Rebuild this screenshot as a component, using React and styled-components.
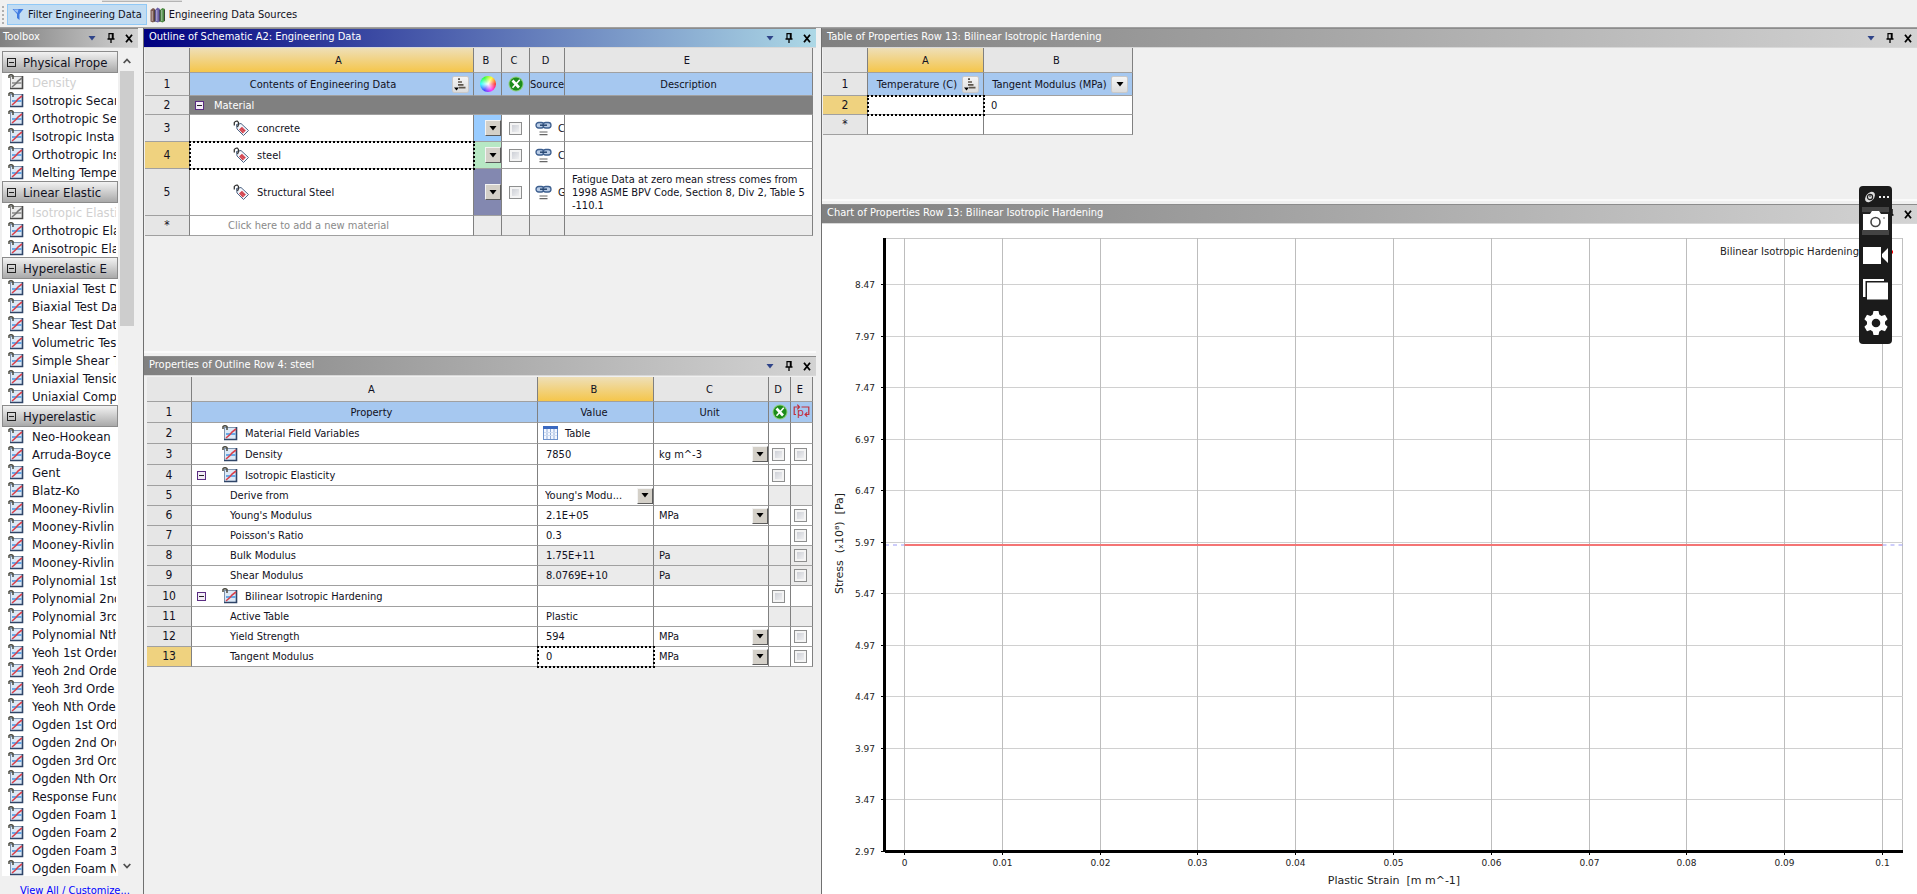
import React, { useLayoutEffect, useRef, useState } from "react";
import styled, { createGlobalStyle } from "styled-components";

const TOOLBOX = [
	{
		title: "Physical Prope",
		items: ["Density", "Isotropic Secan", "Orthotropic Se", "Isotropic Insta", "Orthotropic Ins", "Melting Tempe"],
		disabled: "Density",
	},
	{
		title: "Linear Elastic",
		items: ["Isotropic Elasti", "Orthotropic Ela", "Anisotropic Ela"],
		disabled: "Isotropic Elasti",
	},
	{
		title: "Hyperelastic E",
		items: ["Uniaxial Test D", "Biaxial Test Da", "Shear Test Dat", "Volumetric Tes", "Simple Shear T", "Uniaxial Tensio", "Uniaxial Compr"],
	},
	{
		title: "Hyperelastic",
		items: [
			"Neo-Hookean", "Arruda-Boyce", "Gent", "Blatz-Ko",
			"Mooney-Rivlin", "Mooney-Rivlin", "Mooney-Rivlin", "Mooney-Rivlin",
			"Polynomial 1st", "Polynomial 2nd", "Polynomial 3rd", "Polynomial Nth",
			"Yeoh 1st Order", "Yeoh 2nd Orde", "Yeoh 3rd Orde", "Yeoh Nth Orde",
			"Ogden 1st Ord", "Ogden 2nd Ord", "Ogden 3rd Ord", "Ogden Nth Ord",
			"Response Func", "Ogden Foam 1", "Ogden Foam 2", "Ogden Foam 3", "Ogden Foam N",
		],
	},
];

const MATERIALS = [
	{ row: 3, name: "concrete", color: "#99ccff", source: "C", description: "", height: 27 },
	{ row: 4, name: "steel", color: "#b7e8c4", source: "C", description: "", height: 27, selected: true },
	{
		row: 5,
		name: "Structural Steel",
		color: "#8388b0",
		source: "G",
		description: "Fatigue Data at zero mean stress comes from 1998 ASME BPV Code, Section 8, Div 2, Table 5 -110.1",
		height: 47,
	},
];

const PROPERTIES = [
	{ row: 2, name: "Material Field Variables", icon: true, table: true, value: "Table" },
	{ row: 3, name: "Density", icon: true, value: "7850", unit: "kg m^-3", unitMenu: true, suppress: true, param: true },
	{ row: 4, name: "Isotropic Elasticity", icon: true, group: true, suppress: true },
	{ row: 5, name: "Derive from", value: "Young's Modu...", valueMenu: true, shaded: true },
	{ row: 6, name: "Young's Modulus", value: "2.1E+05", unit: "MPa", unitMenu: true, param: true },
	{ row: 7, name: "Poisson's Ratio", value: "0.3", param: true },
	{ row: 8, name: "Bulk Modulus", value: "1.75E+11", unit: "Pa", param: true, readOnly: true },
	{ row: 9, name: "Shear Modulus", value: "8.0769E+10", unit: "Pa", param: true, readOnly: true },
	{ row: 10, name: "Bilinear Isotropic Hardening", icon: true, group: true, suppress: true },
	{ row: 11, name: "Active Table", value: "Plastic", shaded: true },
	{ row: 12, name: "Yield Strength", value: "594", unit: "MPa", unitMenu: true, param: true },
	{ row: 13, name: "Tangent Modulus", value: "0", unit: "MPa", unitMenu: true, param: true, selected: true },
];

/* ---------- icons ---------- */

const PropertyIcon = ({ muted }) => (
	<svg width="16" height="16" viewBox="0 0 16 16" aria-hidden="true">
		<rect x="2.5" y="2.5" width="12" height="12" fill={muted ? "#ececec" : "#dce9f7"} stroke={muted ? "#8a8a8a" : "#7f93ad"} />
		<path d="M14.5 2v12.500H2" fill="none" stroke={muted ? "#4a4a4a" : "#2f4568"} strokeWidth="1.6" />
		<path d="M4 9h9.500" stroke={muted ? "#999" : "#5aa2e6"} strokeWidth="1.8" />
		<path d="M4 13L8 9.500 10 7l4-3" fill="none" stroke={muted ? "#777" : "#d8404c"} strokeWidth="1.6" />
		<path d="M1 4V1.500Q3 0 5 1.500V5" fill="none" stroke="#4b4b42" strokeWidth="1.500" />
	</svg>
);

const TagIcon = () => (
	<svg width="17" height="17" viewBox="0 0 17 17" aria-hidden="true">
		<path d="M3.500 4.500L8 3.500 15.500 10.500 10.500 15.500 4 9z" fill="#f4f7fc" stroke="#4d6484" />
		<path d="M9 6.700l3.800 3.700-3 3-3.800-3.900z" fill="#cf3f4a" />
		<path d="M7.500 9l3.500 3M9 7.500l3.500 3" stroke="#e98a90" strokeWidth=".6" />
		<path d="M1.300 5.500V2.500Q2.500.8 4.500 1.200 6 2 5.500 4.500L4.500 7" fill="none" stroke="#333" strokeWidth="1.300" />
	</svg>
);

const ChainIcon = () => (
	<svg width="17" height="15" viewBox="0 0 17 15" aria-hidden="true">
		<rect x="1" y="1.500" width="8" height="5.500" rx="2.700" fill="#b9cce6" stroke="#3d5f8f" strokeWidth="1.300" />
		<rect x="8" y="1.500" width="8" height="5.500" rx="2.700" fill="#b9cce6" stroke="#3d5f8f" strokeWidth="1.300" />
		<path d="M5 4.200h7" stroke="#27466f" strokeWidth="1.500" />
		<path d="M4.500 11h8M4.500 13.700h8" stroke="#666" strokeWidth="1.200" />
	</svg>
);

const SuppressIcon = () => (
	<svg width="16" height="16" viewBox="0 0 16 16" aria-hidden="true">
		<circle cx="8" cy="8" r="7.500" fill="#8ccf7e" />
		<circle cx="8" cy="8" r="6.500" fill="#1c8c1c" />
		<path d="M4.500 4.500L11 11.500" stroke="#fff" strokeWidth="2.600" />
		<path d="M11.800 3.800L4.500 11.800" stroke="#fff" strokeWidth="1.600" />
	</svg>
);

const ParameterIcon = () => (
	<svg width="17" height="16" viewBox="0 0 17 16" aria-hidden="true">
		<path d="M3 10.500H1.200V3H6M4.300.6L6.500 3 4.300 5.400" fill="none" stroke="#c2303c" strokeWidth="1.200" />
		<path d="M8.500 3h7.300v7.500H12.500M14.200 8.300L12 10.500l2.200 2.200" fill="none" stroke="#c2303c" strokeWidth="1.200" />
		<text x="4" y="12" fontFamily="DejaVu Sans, sans-serif" fontSize="11" fill="#c2303c">p</text>
	</svg>
);

const TableIcon = () => (
	<svg width="15" height="14" viewBox="0 0 15 14" aria-hidden="true">
		<rect x=".5" y=".5" width="14" height="13" fill="#f3f7ff" stroke="#6d92cc" />
		<rect x="0" y="0" width="15" height="3" fill="#3a69c0" />
		<path d="M4 3v10M7.500 3v10M11 3v10" stroke="#8fabd8" />
		<path d="M1 6.500h13M1 9.500h13" stroke="#cfdcf0" />
	</svg>
);

const FunnelIcon = () => (
	<svg width="12" height="13" viewBox="0 0 12 13" aria-hidden="true">
		<path d="M.5 1h11L7.500 6v6L5 10V6z" fill="#3f7ae0" />
		<path d="M1.500 1.500h5L5.500 5z" fill="#9dc1f7" />
	</svg>
);

const BooksIcon = () => (
	<svg width="15" height="16" viewBox="0 0 15 16" aria-hidden="true">
		<path d="M.5 3L3 1l2 1v12l-2 1.500-2.500-1z" fill="#7d5a52" />
		<path d="M5 3l2.500-2.500L10 2v12l-2 1.500-3-1z" fill="#6a5fa8" />
		<path d="M10 3l2.500-2L15 2v12l-2.500 1.500-2.500-1z" fill="#4d8a43" />
		<path d="M2.200 4v10M6.800 3v11M11.800 3v11" stroke="#fff" strokeOpacity=".55" />
		<path d="M4.700 3v12M9.800 3v12M14.500 3v11" stroke="#333" strokeWidth=".8" />
	</svg>
);

const SortIcon = () => (
	<svg width="13" height="13" viewBox="0 0 13 13" aria-hidden="true">
		<path d="M4 1.200H6M4 4h4M4 6.800h5.500M5 9.600h6.500" stroke="#5d564c" strokeWidth="1.700" />
		<path d="M0 9.500h5L2.500 12.500z" fill="#000" />
	</svg>
);

const ArrowIcon = ({ color = "#000" }) => (
	<svg width="8" height="5" viewBox="0 0 8 5" aria-hidden="true">
		<path d="M.5 0h7L4 4.500z" fill={color} />
	</svg>
);

const PinIcon = () => (
	<svg width="8" height="10" viewBox="0 0 8 10" aria-hidden="true">
		<path d="M2 0v6M6 0v6M2 .6h4" stroke="#000" strokeWidth="1.200" fill="none" />
		<path d="M5.500 0v6" stroke="#000" strokeWidth="1.500" />
		<path d="M.5 6h7M4 6v4" stroke="#000" strokeWidth="1.300" />
	</svg>
);

const CloseIcon = () => (
	<svg width="8" height="9" viewBox="0 0 8 9" aria-hidden="true">
		<path d="M1 .8l6 7.400M7 .8L1 8.200" stroke="#000" strokeWidth="1.800" />
	</svg>
);

/* ---------- page ---------- */

const GlobalStyle = createGlobalStyle`
	* {
		box-sizing: border-box;
	}
	body {
		margin: 0;
		background: #f0f0f0;
		color: #111122;
		font-family: Tahoma, "DejaVu Sans Condensed", "DejaVu Sans", sans-serif;
		font-size: 11px;
	}
	button, select, input {
		font: inherit;
		color: inherit;
		margin: 0;
		padding: 0;
	}
	svg {
		display: block;
		flex: none;
	}
`;

const Page = styled.div`
	display: flex;
	flex-direction: column;
	height: 100vh;
	overflow: hidden;
`;

const Toolbar = styled.div`
	display: flex;
	align-items: center;
	gap: 1px;
	height: 28px;
	flex: none;
	padding: 4px 0 2px 2px;
	border-bottom: 1px solid #a0a0a0;
	position: relative;
`;

const TabStub = styled.div`
	position: absolute;
	top: 0;
	left: 102px;
	width: 80px;
	height: 2px;
	background: #dcdcdc;
	border-bottom: 1px solid #b4b4b4;
`;

const Grip = styled.div`
	width: 2px;
	height: 18px;
	margin-right: 2px;
	background: repeating-linear-gradient(#b0b0b0 0 2px, transparent 2px 4px);
`;

const ToolButton = styled.button`
	display: flex;
	align-items: center;
	gap: 4px;
	height: 21px;
	padding: 0 4px 0 ${(p) => (p.$active ? "4px" : "1px")};
	border: 1px solid ${(p) => (p.$active ? "#90c8f6" : "transparent")};
	background: ${(p) => (p.$active ? "#c2dcf2" : "transparent")};
	font-size: 11px;
	white-space: nowrap;
`;

const Workspace = styled.div`
	display: grid;
	grid-template-columns: 138px minmax(0, 678fr) minmax(0, 1101fr);
	flex: 1;
	min-height: 0;
`;

const Column = styled.div`
	display: flex;
	flex-direction: column;
	min-width: 0;
	min-height: 0;
	margin-left: 5px;
	border-left: 1px solid #707070;
`;

const ToolboxColumn = styled.aside`
	display: flex;
	flex-direction: column;
	min-height: 0;
`;

const Panel = styled.section`
	display: flex;
	flex-direction: column;
	min-height: 0;
	flex: ${(p) => (p.$height ? "none" : "1")};
	height: ${(p) => (p.$height ? p.$height + "px" : "auto")};
	background: ${(p) => (p.$white ? "#fff" : "#f0f0f0")};
`;

const PanelHeader = styled.header`
	display: flex;
	align-items: center;
	flex: none;
	height: 20px;
	padding: 0 0 0 ${(p) => (p.$narrow ? "3px" : "5px")};
	border-top: 1px solid #8c8c8c;
	border-bottom: 1px solid #d8d8d8;
	color: #fff;
	background: ${(p) => (p.$focused ? "linear-gradient(90deg, #000080, #add8e6)" : "linear-gradient(90deg, #808080, #d3d3d3)")};
`;

const PanelTitle = styled.h2`
	flex: 1;
	min-width: 0;
	margin: 0;
	font-size: 11px;
	font-weight: normal;
	line-height: 16px;
	padding-bottom: 2px;
	white-space: nowrap;
`;

const HeaderButton = styled.button`
	display: grid;
	place-items: center;
	width: 18px;
	height: 16px;
	margin-left: ${(p) => (p.$close ? "0" : "1px")};
	border: 0;
	background: none;
`;

const Splitter = styled.div`
	flex: none;
	height: 5px;
	background: #f0f0f0;
	border-top: 2px solid #fafafa;
`;

const ToolboxBody = styled.div`
	display: flex;
	flex: 1;
	min-height: 0;
	padding: 3px 0 0 2px;
`;

const ToolboxList = styled.div`
	flex: none;
	width: 116px;
	overflow: hidden;
	background: #fff;
`;

const GroupButton = styled.button`
	display: flex;
	align-items: center;
	gap: 7px;
	width: 100%;
	height: 22px;
	padding: 0 4px;
	border: 1px solid #8b8b8b;
	background: linear-gradient(#f2f2f2, #a9a9a9);
	font-size: 13px;
	white-space: nowrap;
`;

const Items = styled.ul`
	margin: 0;
	padding: 0;
	list-style: none;
`;

const Item = styled.li`
	display: flex;
	align-items: center;
	gap: 8px;
	height: 18px;
	margin-right: 2px;
	padding-left: 6px;
	overflow: hidden;
	white-space: nowrap;
	font-size: 13px;
	color: ${(p) => (p.$muted ? "#d0d0d0" : "#111122")};
`;

const ScrollTrack = styled.div`
	display: flex;
	flex-direction: column;
	align-items: center;
	width: 14px;
	margin-left: 2px;
`;

const ScrollThumb = styled.div`
	width: 14px;
	height: 255px;
	background: #cdcdcd;
	margin-bottom: auto;
`;

const ScrollButton = styled.button`
	display: grid;
	place-items: center;
	width: 14px;
	height: 20px;
	border: 0;
	background: none;
`;

const ToolboxLink = styled.a`
	flex: none;
	height: 18px;
	padding: 7px 0 0 20px;
	line-height: 16px;
	font-size: 11px;
	white-space: nowrap;
	color: #0000ff;
`;

const Grid = styled.table`
	width: ${(p) => (p.$fit ? "auto" : "100%")};
	table-layout: fixed;
	border-collapse: separate;
	border-spacing: 0;
	line-height: 13px;
`;

const GridFrame = styled.div`
	flex: none;
	padding: ${(p) => p.$padding};
`;

const Row = styled.tr`
	height: ${(p) => p.$h}px;
`;

const Cell = styled.td`
	padding: 0 0 0 ${(p) => p.$pad || 0}px;
	overflow: hidden;
	white-space: ${(p) => (p.$wrap ? "normal" : "nowrap")};
	border-right: 1px solid #808080;
	border-bottom: 1px solid #a0a0a0;
	background: ${(p) => p.$bg || "#fff"};
	outline: ${(p) => (p.$selected ? "2px dotted #000" : "none")};
	outline-offset: -1px;
	color: ${(p) => p.$color || "inherit"};
`;

const HeadCell = styled.th`
	padding: 0 ${(p) => p.$padRight || 0}px 0 ${(p) => p.$padLeft || 0}px;
	font-weight: normal;
	overflow: hidden;
	white-space: nowrap;
	border-right: 1px solid #808080;
	border-bottom: 1px solid #a0a0a0;
`;

const LetterCell = styled(HeadCell)`
	background: ${(p) => (p.$active ? "linear-gradient(#eedfb8, #f5c64b)" : "#e6e6e6")};
`;

const TitleCell = styled(HeadCell)`
	background: #a6c8f0;
`;

const NumberCell = styled(HeadCell)`
	font-size: 12px;
	background: ${(p) => (p.$active ? "#efd27f" : "#e6e6e6")};
`;

const Inline = styled.span`
	display: flex;
	align-items: center;
	justify-content: ${(p) => (p.$center ? "center" : "flex-start")};
	gap: ${(p) => p.$gap || 7}px;
`;

const TitleLine = styled.span`
	display: flex;
	align-items: center;
	padding: 0 4px;

	span {
		flex: 1;
		text-align: center;
	}
`;

const SquareButton = styled.button`
	display: grid;
	place-items: center;
	flex: none;
	width: 17px;
	height: 17px;
	border: 1px solid #c9c9c9;
	border-radius: 2px;
	background: linear-gradient(#f5f5f5, #dcdcdc);
`;

const Collapse = styled.button`
	display: block;
	flex: none;
	width: 9px;
	height: 9px;
	border: 1px solid #5a2d82;
	background: linear-gradient(#222, #222) center / 5px 1px no-repeat #f2ecf6;
`;

const GroupMark = styled.span`
	flex: none;
	width: 9px;
	height: 9px;
	border: 1px solid #222;
	background: linear-gradient(#222, #222) center / 5px 1px no-repeat;
`;

const Check = styled.input`
	appearance: none;
	display: block;
	width: 13px;
	height: 13px;
	border: 1px solid #8e8f8f;
	background: linear-gradient(135deg, #c4c7cf, #f8f8f8);
	box-shadow: inset 0 0 0 2px #f4f4f4;
`;

const ColorWheel = styled.span`
	display: block;
	width: 16px;
	height: 16px;
	margin: 0 auto;
	border-radius: 50%;
	background: radial-gradient(#fff, transparent 65%),
		conic-gradient(from 90deg, #f33, #f3f, #44f, #3ff, #3f3, #ff3, #f33);
`;

const MenuFrame = styled.span`
	position: relative;
	display: block;
	height: 16px;
`;

const MenuSelect = styled.select`
	appearance: none;
	display: block;
	width: 100%;
	height: 16px;
	border: 0;
	padding: 0 16px 0 ${(p) => p.$pad || 0}px;
	background: transparent;
`;

const MenuArrow = styled.span`
	position: absolute;
	right: 0;
	top: 0;
	display: grid;
	place-items: center;
	width: 16px;
	height: 16px;
	border: 1px solid;
	border-color: #f4f4f4 #5c5c5c #5c5c5c #f4f4f4;
	background: #d4d0c8;
	pointer-events: none;
`;

const Menu = ({ label, value, pad }) => (
	<MenuFrame>
		<MenuSelect aria-label={label} $pad={pad} defaultValue={value}>
			<option value={value}>{value}</option>
		</MenuSelect>
		<MenuArrow>
			<ArrowIcon />
		</MenuArrow>
	</MenuFrame>
);

const Header = ({ title, focused, narrow }) => (
	<PanelHeader $focused={focused} $narrow={narrow}>
		<PanelTitle>{title}</PanelTitle>
		<HeaderButton aria-label="Window menu">
			<ArrowIcon color="#2f4489" />
		</HeaderButton>
		<HeaderButton aria-label="Auto hide">
			<PinIcon />
		</HeaderButton>
		<HeaderButton $close aria-label="Close">
			<CloseIcon />
		</HeaderButton>
	</PanelHeader>
);

const Toolbox = () => (
	<ToolboxColumn>
		<Header title="Toolbox" narrow />
		<ToolboxBody>
			<ToolboxList>
				{TOOLBOX.map((group) => (
					<div key={group.title}>
						<GroupButton>
							<GroupMark />
							{group.title}
						</GroupButton>
						<Items>
							{group.items.map((item, i) => (
								<Item key={i} $muted={item === group.disabled}>
									<PropertyIcon muted={item === group.disabled} />
									{item}
								</Item>
							))}
						</Items>
					</div>
				))}
			</ToolboxList>
			<ScrollTrack>
				<ScrollButton aria-label="Scroll up">
					<svg width="8" height="6" viewBox="0 0 8 6">
						<path d="M.7 5L4 1.500 7.300 5" fill="none" stroke="#505050" strokeWidth="1.800" />
					</svg>
				</ScrollButton>
				<ScrollThumb />
				<ScrollButton aria-label="Scroll down">
					<svg width="8" height="6" viewBox="0 0 8 6">
						<path d="M.7 1L4 4.500 7.300 1" fill="none" stroke="#505050" strokeWidth="1.800" />
					</svg>
				</ScrollButton>
			</ScrollTrack>
		</ToolboxBody>
		<ToolboxLink href="#customize">View All / Customize...</ToolboxLink>
	</ToolboxColumn>
);

const Outline = () => (
	<GridFrame $padding="0 3px 0 1px">
		<Grid>
			<colgroup>
				<col style={{ width: 45 }} />
				<col style={{ width: 284 }} />
				<col style={{ width: 28 }} />
				<col style={{ width: 28 }} />
				<col style={{ width: 35 }} />
				<col />
			</colgroup>
			<thead>
				<Row $h={25}>
					<LetterCell />
					<LetterCell $active $padLeft={14}>A</LetterCell>
					<LetterCell $padRight={3}>B</LetterCell>
					<LetterCell $padRight={3}>C</LetterCell>
					<LetterCell $padRight={3}>D</LetterCell>
					<LetterCell $padRight={3}>E</LetterCell>
				</Row>
				<Row $h={23}>
					<NumberCell>1</NumberCell>
					<TitleCell>
						<TitleLine>
							<span>Contents of Engineering Data</span>
							<SquareButton aria-label="Sort contents">
								<SortIcon />
							</SquareButton>
						</TitleLine>
					</TitleCell>
					<TitleCell>
						<ColorWheel />
					</TitleCell>
					<TitleCell>
						<Inline $center>
							<SuppressIcon />
						</Inline>
					</TitleCell>
					<TitleCell>Source</TitleCell>
					<TitleCell>Description</TitleCell>
				</Row>
			</thead>
			<tbody>
				<Row $h={19}>
					<NumberCell>2</NumberCell>
					<Cell colSpan={5} $bg="#808080" $color="#fff" $pad={5}>
						<Inline $gap={10}>
							<Collapse aria-label="Collapse materials" />
							Material
						</Inline>
					</Cell>
				</Row>
				{MATERIALS.map((m) => (
					<Row key={m.row} $h={m.height}>
						<NumberCell $active={m.selected}>{m.row}</NumberCell>
						<Cell $pad={43} $selected={m.selected}>
							<Inline>
								<TagIcon />
								{m.name}
							</Inline>
						</Cell>
						<Cell $bg={m.color}>
							<Menu label={`Color of ${m.name}`} value="" />
						</Cell>
						<Cell $pad={7}>
							<Check type="checkbox" aria-label={`Suppress ${m.name}`} />
						</Cell>
						<Cell $pad={5}>
							<Inline $gap={6}>
								<ChainIcon />
								{m.source}
							</Inline>
						</Cell>
						<Cell $wrap $pad={7}>
							{m.description}
						</Cell>
					</Row>
				))}
				<Row $h={20}>
					<NumberCell>*</NumberCell>
					<Cell $pad={38} $color="#8a8a8a">
						Click here to add a new material
					</Cell>
					<Cell $bg="#ececec" />
					<Cell $bg="#ececec" />
					<Cell $bg="#ececec" />
					<Cell $bg="#ececec" />
				</Row>
			</tbody>
		</Grid>
	</GridFrame>
);

const PropertyRow = ({ p }) => {
	const valueBg = p.readOnly ? "#ebebeb" : "#fff";
	const flagBg = p.readOnly || p.shaded ? "#ebebeb" : "#fff";
	return (
		<Row $h={p.icon ? 21 : 20}>
			<NumberCell $active={p.selected}>{p.row}</NumberCell>
			<Cell $pad={p.group ? 5 : p.icon ? 30 : 38}>
				<Inline>
					{p.group && (
						<Inline $gap={16}>
							<Collapse aria-label={`Collapse ${p.name}`} />
							<PropertyIcon />
						</Inline>
					)}
					{p.icon && !p.group && <PropertyIcon />}
					{p.name}
				</Inline>
			</Cell>
			<Cell $bg={valueBg} $selected={p.selected} $pad={p.table ? 5 : p.valueMenu ? 0 : 8}>
				{p.valueMenu && <Menu label={p.name} value={p.value} pad={7} />}
				{p.table && (
					<Inline>
						<TableIcon />
						{p.value}
					</Inline>
				)}
				{!p.valueMenu && !p.table && p.value}
			</Cell>
			<Cell $bg={valueBg} $pad={p.unitMenu ? 0 : 5}>
				{p.unitMenu ? <Menu label={`${p.name} unit`} value={p.unit} pad={5} /> : p.unit}
			</Cell>
			<Cell $bg={flagBg} $pad={3}>
				{p.suppress && <Check type="checkbox" aria-label={`Suppress ${p.name}`} />}
			</Cell>
			<Cell $bg={flagBg} $pad={3}>
				{p.param && <Check type="checkbox" aria-label={`Parameterize ${p.name}`} />}
			</Cell>
		</Row>
	);
};

const Properties = () => (
	<GridFrame $padding="1px 3px 0 3px">
		<Grid>
			<colgroup>
				<col style={{ width: 45 }} />
				<col />
				<col style={{ width: 116 }} />
				<col style={{ width: 115 }} />
				<col style={{ width: 22 }} />
				<col style={{ width: 22 }} />
			</colgroup>
			<thead>
				<Row $h={25}>
					<LetterCell />
					<LetterCell $padLeft={14}>A</LetterCell>
					<LetterCell $active $padRight={3}>B</LetterCell>
					<LetterCell $padRight={3}>C</LetterCell>
					<LetterCell $padRight={3}>D</LetterCell>
					<LetterCell $padRight={3}>E</LetterCell>
				</Row>
				<Row $h={21}>
					<NumberCell>1</NumberCell>
					<TitleCell $padLeft={14}>Property</TitleCell>
					<TitleCell $padRight={3}>Value</TitleCell>
					<TitleCell $padRight={3}>Unit</TitleCell>
					<TitleCell>
						<Inline $center>
							<SuppressIcon />
						</Inline>
					</TitleCell>
					<TitleCell>
						<Inline $center>
							<ParameterIcon />
						</Inline>
					</TitleCell>
				</Row>
			</thead>
			<tbody>
				{PROPERTIES.map((p) => (
					<PropertyRow key={p.row} p={p} />
				))}
			</tbody>
		</Grid>
	</GridFrame>
);

const ValueTable = () => (
	<GridFrame $padding="0 0 0 1px">
		<Grid $fit>
			<colgroup>
				<col style={{ width: 45 }} />
				<col style={{ width: 116 }} />
				<col style={{ width: 149 }} />
			</colgroup>
			<thead>
				<Row $h={25}>
					<LetterCell />
					<LetterCell $active>A</LetterCell>
					<LetterCell $padRight={3}>B</LetterCell>
				</Row>
				<Row $h={23}>
					<NumberCell>1</NumberCell>
					<TitleCell>
						<TitleLine>
							<span>Temperature (C)</span>
							<SquareButton aria-label="Sort temperature">
								<SortIcon />
							</SquareButton>
						</TitleLine>
					</TitleCell>
					<TitleCell>
						<TitleLine>
							<span>Tangent Modulus (MPa)</span>
							<SquareButton aria-label="Filter tangent modulus">
								<ArrowIcon />
							</SquareButton>
						</TitleLine>
					</TitleCell>
				</Row>
			</thead>
			<tbody>
				<Row $h={19}>
					<NumberCell $active>2</NumberCell>
					<Cell $selected />
					<Cell $pad={7}>0</Cell>
				</Row>
				<Row $h={20}>
					<NumberCell>*</NumberCell>
					<Cell />
					<Cell />
				</Row>
			</tbody>
		</Grid>
	</GridFrame>
);

/* ---------- chart ---------- */

const ChartBox = styled.div`
	flex: 1;
	min-height: 0;
	overflow: hidden;
	background: #fff;

	text {
		font-family: Verdana, "DejaVu Sans", sans-serif;
		fill: #222;
	}
`;

const Chart = () => {
	const box = useRef(null);
	const [size, setSize] = useState({ w: 1095, h: 669 });

	useLayoutEffect(() => {
		const measure = () => setSize({ w: box.current.clientWidth, h: box.current.clientHeight });
		measure();
		window.addEventListener("resize", measure);
		return () => window.removeEventListener("resize", measure);
	}, []);

	const left = 63;
	const right = size.w - 14;
	const top = 14;
	const bottom = size.h - 43;
	const x0 = left + 19;
	const stepX = (right - 21 - x0) / 10;
	const stepY = (bottom - top - 46) / 11;
	const px = (i) => Math.round(x0 + i * stepX) + 0.5;
	const py = (i) => Math.round(bottom - i * stepY) + 0.5;
	const lineY = Math.round(bottom - ((5.94 - 2.97) / 0.5) * stepY);

	return (
		<ChartBox ref={box}>
			<svg width={size.w} height={size.h}>
				<path d={`M${left} ${top + 0.5}H${right}`} stroke="#c8c8c8" />
				<path d={`M${right - 0.5} ${top}V${bottom}`} stroke="#c0c0c0" />
				{Array.from({ length: 12 }, (_, i) => (
					<g key={i}>
						<path d={`M${left} ${py(i)}H${right}`} stroke="#d0d0d0" />
						<path d={`M${left - 4} ${py(i)}H${left}`} stroke="#000" />
						<text x={left - 10} y={py(i) + 3} fontSize="9" textAnchor="end">
							{(2.97 + i * 0.5).toFixed(2)}
						</text>
					</g>
				))}
				{Array.from({ length: 11 }, (_, i) => (
					<g key={i}>
						<path d={`M${px(i)} ${top}V${bottom}`} stroke="#bdbdbd" />
						<path d={`M${px(i)} ${bottom}v4`} stroke="#000" />
						<text x={px(i)} y={bottom + 15} fontSize="9" textAnchor="middle">
							{i / 100}
						</text>
					</g>
				))}
				<path d={`M${left} ${lineY}H${px(0)}M${px(10)} ${lineY}H${right}`} stroke="#9a9af5" strokeDasharray="4 4" />
				<path d={`M${px(0)} ${lineY}H${px(10)}`} stroke="#f47474" strokeWidth="2" />
				<path d={`M${left - 0.5} ${top}V${bottom + 1}`} stroke="#000" strokeWidth="3" />
				<path d={`M${left} ${bottom + 0.5}H${right}`} stroke="#000" strokeWidth="3" />
				<text x={right - 44} y={top + 17} fontSize="10" textAnchor="end">
					Bilinear Isotropic Hardening
				</text>
				<path d={`M${right - 40} ${top + 14}h30`} stroke="#f00" strokeWidth="3" />
				<text x={(left + right) / 2} y={size.h - 10} fontSize="11" textAnchor="middle">
					{"Plastic Strain\u00a0 [m m^-1]"}
				</text>
				<text transform={`translate(21 ${(top + bottom) / 2 - 1}) rotate(-90)`} fontSize="11" textAnchor="middle">
					{"Stress\u00a0 (\u209310\u2078)\u00a0 [Pa]"}
				</text>
			</svg>
		</ChartBox>
	);
};

/* ---------- floating capture bar ---------- */

const CaptureBar = styled.div`
	position: absolute;
	top: 186px;
	right: 25px;
	display: flex;
	flex-direction: column;
	align-items: center;
	width: 33px;
	height: 158px;
	padding-top: 3px;
	border-radius: 4px;
	background: #1b1b1b;
`;

const CaptureButton = styled.button`
	display: grid;
	place-items: center;
	width: 27px;
	height: ${(p) => (p.$small ? "16px" : "28px")};
	margin-bottom: ${(p) => (p.$small ? "2px" : "6px")};
	border: 0;
	background: ${(p) => (p.$active ? "linear-gradient(#444 0 5px, #222 5px 23px, #444 23px)" : "none")};
`;

const Capture = () => (
	<CaptureBar>
		<CaptureButton $small aria-label="More">
			<svg width="26" height="12" viewBox="0 0 26 12">
				<ellipse cx="7" cy="6" rx="6" ry="4" transform="rotate(-50 7 6)" fill="#ddd" />
				<circle cx="7" cy="6" r="2.600" fill="none" stroke="#222" strokeWidth="1.200" />
				<path d="M7 6V3.500" stroke="#222" />
				<path d="M16 6h2M20 6h2M24 6h2" stroke="#eee" strokeWidth="2" />
			</svg>
		</CaptureButton>
		<CaptureButton $active aria-label="Screenshot">
			<svg width="25" height="20" viewBox="0 0 25 20">
				<path d="M0 3h7l2-3h7l2 3h7v16H0z" fill="#fff" />
				<circle cx="12.500" cy="11" r="4.500" fill="none" stroke="#444" strokeWidth="1.600" />
				<circle cx="21" cy="7" r=".8" fill="#555" />
			</svg>
		</CaptureButton>
		<CaptureButton aria-label="Record video">
			<svg width="25" height="17" viewBox="0 0 25 17">
				<path d="M0 0h18v17H0zM19 7l6-6v15l-6-6z" fill="#fff" />
			</svg>
		</CaptureButton>
		<CaptureButton aria-label="Gallery">
			<svg width="25" height="21" viewBox="0 0 25 21">
				<path d="M0 0h21v2H2.500v16H0z" fill="#fff" />
				<rect x="4" y="3.500" width="21" height="17" fill="#fff" />
			</svg>
		</CaptureButton>
		<CaptureButton aria-label="Settings">
			<svg width="24" height="24" viewBox="0 0 24 24">
				<path
					fillRule="evenodd"
					fill="#fff"
					d="M9.500 0h5l.8 3.600 2.200 1.300L21 3.700l2.600 4.500L21 10.700v2.600l2.600 2.500-2.600 4.500-3.500-1.200-2.200 1.300-.8 3.600h-5l-.8-3.600-2.200-1.300L3 20.300.4 15.800 3 13.300v-2.600L.4 8.200 3 3.700l3.500 1.200 2.200-1.300zM12 7.700a4.300 4.300 0 100 8.600 4.300 4.300 0 000-8.600z"
				/>
			</svg>
		</CaptureButton>
	</CaptureBar>
);

const App = () => (
	<Page>
		<GlobalStyle />
		<Toolbar>
			<TabStub />
			<Grip />
			<ToolButton $active>
				<FunnelIcon />
				Filter Engineering Data
			</ToolButton>
			<ToolButton>
				<BooksIcon />
				Engineering Data Sources
			</ToolButton>
		</Toolbar>
		<Workspace>
			<Toolbox />
			<Column>
				<Panel $height={323}>
					<Header title="Outline of Schematic A2: Engineering Data" focused />
					<Outline />
				</Panel>
				<Splitter />
				<Panel>
					<Header title="Properties of Outline Row 4: steel" />
					<Properties />
				</Panel>
			</Column>
			<Column>
				<Panel $height={171}>
					<Header title="Table of Properties Row 13: Bilinear Isotropic Hardening" />
					<ValueTable />
				</Panel>
				<Splitter />
				<Panel $white>
					<Header title="Chart of Properties Row 13: Bilinear Isotropic Hardening" />
					<Chart />
				</Panel>
			</Column>
		</Workspace>
		<Capture />
	</Page>
);

export default App;
